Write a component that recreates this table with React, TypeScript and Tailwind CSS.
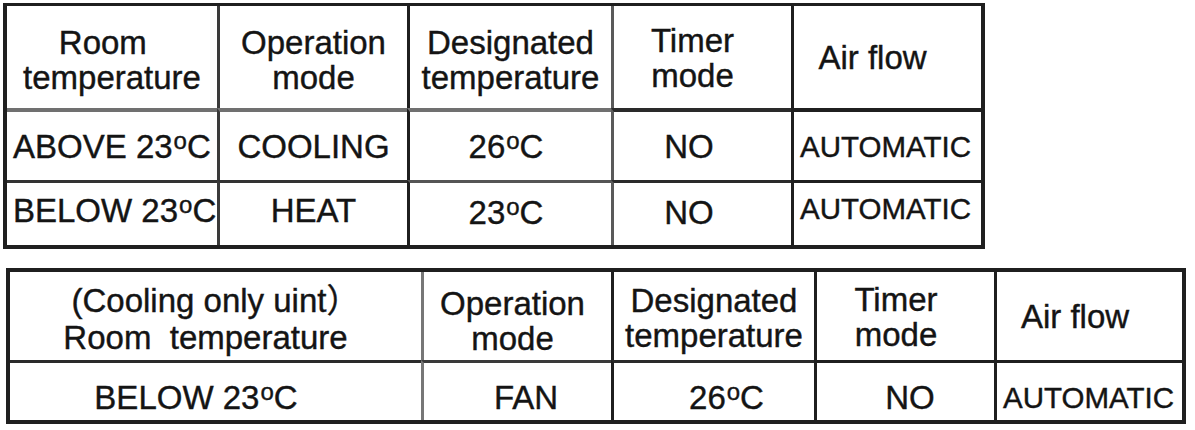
import React from "react";

// Degree mark drawn as a raised small "o", as in the scanned table
function Deg() {
  return <span className="text-[24px] leading-none align-[9px] ml-px">o</span>;
}

function Cell({ className, children }: { className: string; children: React.ReactNode }) {
  return <div className={"flex shrink-0 items-center text-center " + className}>{children}</div>;
}

export default function App() {
  return (
    <div className="bg-white text-[#141414] text-[33px] leading-[35px] font-['Liberation_Sans','Noto_Sans_CJK_SC',sans-serif] [-webkit-text-stroke:0.4px_#141414] w-[1195px] h-[430px] overflow-hidden">
      {/* Heating / cooling unit */}
      <div className="ml-[3px] mt-[3px] w-[982px] border-l-4 border-r-4 border-t-[3px] border-b-4 border-[#1f1f1f]">
        <div className="flex h-[102px]">
          <Cell className="w-[210px] flex-col justify-center pt-[6px]">
            <span>Room{"\u00a0\u00a0"}</span>
            <span>temperature</span>
          </Cell>
          <Cell className="w-[190px] flex-col justify-center pt-[6px] border-l-[3px] border-l-[#3a3a3a]">
            <span>Operation</span>
            <span>mode</span>
          </Cell>
          <Cell className="w-[204px] flex-col justify-center pt-[6px] border-l-[3px] border-l-[#1f1f1f]">
            <span>Designated</span>
            <span>temperature</span>
          </Cell>
          <Cell className="w-[180px] flex-col justify-center pt-[2px] pr-5 border-l-[3px] border-l-[#5a5a5a]">
            <span>Timer</span>
            <span>mode</span>
          </Cell>
          <Cell className="w-[190px] justify-center pr-[30px] border-l-[3px] border-l-[#1f1f1f]">
            <span>Air flow</span>
          </Cell>
        </div>

        <div className="flex h-[72px]">
          <Cell className="w-[210px] justify-start pl-[6px] border-t-4 border-t-[#707070]">
            <span>ABOVE 23<Deg />C</span>
          </Cell>
          <Cell className="w-[190px] justify-center border-t-4 border-t-[#707070] border-l-[3px] border-l-[#3a3a3a]">
            <span>COOLING</span>
          </Cell>
          <Cell className="w-[204px] justify-center pr-[9px] border-t-4 border-t-[#707070] border-l-[3px] border-l-[#1f1f1f]">
            <span>26<Deg />C</span>
          </Cell>
          <Cell className="w-[180px] justify-center pr-[27px] border-t-4 border-t-[#2a2a2a] border-l-[3px] border-l-[#5a5a5a]">
            <span>NO</span>
          </Cell>
          <Cell className="w-[190px] justify-start pl-[6px] text-[29.5px] border-t-4 border-t-[#1f1f1f] border-l-[3px] border-l-[#1f1f1f]">
            <span>AUTOMATIC</span>
          </Cell>
        </div>

        <div className="flex h-[65px]">
          <Cell className="w-[210px] justify-start pl-[6px] pb-2 border-t-[3px] border-t-[#333333]">
            <span>BELOW 23<Deg />C</span>
          </Cell>
          <Cell className="w-[190px] justify-center pb-2 border-t-[3px] border-t-[#333333] border-l-[3px] border-l-[#3a3a3a]">
            <span>HEAT</span>
          </Cell>
          <Cell className="w-[204px] justify-center pr-[9px] pb-1 border-t-[3px] border-t-[#555555] border-l-[3px] border-l-[#1f1f1f]">
            <span>23<Deg />C</span>
          </Cell>
          <Cell className="w-[180px] justify-center pr-[27px] pb-1 border-t-[3px] border-t-[#2a2a2a] border-l-[3px] border-l-[#5a5a5a]">
            <span>NO</span>
          </Cell>
          <Cell className="w-[190px] justify-start pl-[6px] pb-3 text-[29.5px] border-t-[3px] border-t-[#1f1f1f] border-l-[3px] border-l-[#1f1f1f]">
            <span>AUTOMATIC</span>
          </Cell>
        </div>
      </div>

      {/* Cooling only unit */}
      <div className="ml-[6px] mt-[19px] w-[1180px] border-4 border-[#1f1f1f]">
        <div className="flex h-[88px]">
          <Cell className="w-[411px] flex-col justify-center pt-[5px] leading-[37px]">
            <span>(Cooling only uint）</span>
            <span className="whitespace-pre pr-[20px]">Room  temperature</span>
          </Cell>
          <Cell className="w-[190px] flex-col justify-center pt-[10px] pr-[10px] border-l-[3px] border-l-[#777777]">
            <span>Operation</span>
            <span>mode</span>
          </Cell>
          <Cell className="w-[203px] flex-col justify-center pt-[4px] border-l-[3px] border-l-[#1f1f1f]">
            <span>Designated</span>
            <span>temperature</span>
          </Cell>
          <Cell className="w-[180px] flex-col justify-center pt-[2px] pr-[19px] border-l-[3px] border-l-[#1f1f1f]">
            <span>Timer</span>
            <span>mode</span>
          </Cell>
          <Cell className="w-[188px] justify-center pr-[29px] border-l-[3px] border-l-[#1f1f1f]">
            <span>Air flow</span>
          </Cell>
        </div>

        <div className="flex h-[60px]">
          <Cell className="w-[411px] justify-center pt-3 pr-[39px] border-t-[3px] border-t-[#2a2a2a]">
            <span>BELOW 23<Deg />C</span>
          </Cell>
          <Cell className="w-[190px] justify-center pt-3 pl-[17px] border-t-[3px] border-t-[#3a3a3a] border-l-[3px] border-l-[#777777]">
            <span>FAN</span>
          </Cell>
          <Cell className="w-[203px] justify-center pt-3 pl-[25px] border-t-[3px] border-t-[#2a2a2a] border-l-[3px] border-l-[#1f1f1f]">
            <span>26<Deg />C</span>
          </Cell>
          <Cell className="w-[180px] justify-center pt-3 pl-[9px] border-t-[3px] border-t-[#1f1f1f] border-l-[3px] border-l-[#1f1f1f]">
            <span>NO</span>
          </Cell>
          <Cell className="w-[188px] justify-start pt-3 pl-[6px] text-[29.5px] border-t-[3px] border-t-[#1f1f1f] border-l-[3px] border-l-[#1f1f1f]">
            <span>AUTOMATIC</span>
          </Cell>
        </div>
      </div>
    </div>
  );
}
